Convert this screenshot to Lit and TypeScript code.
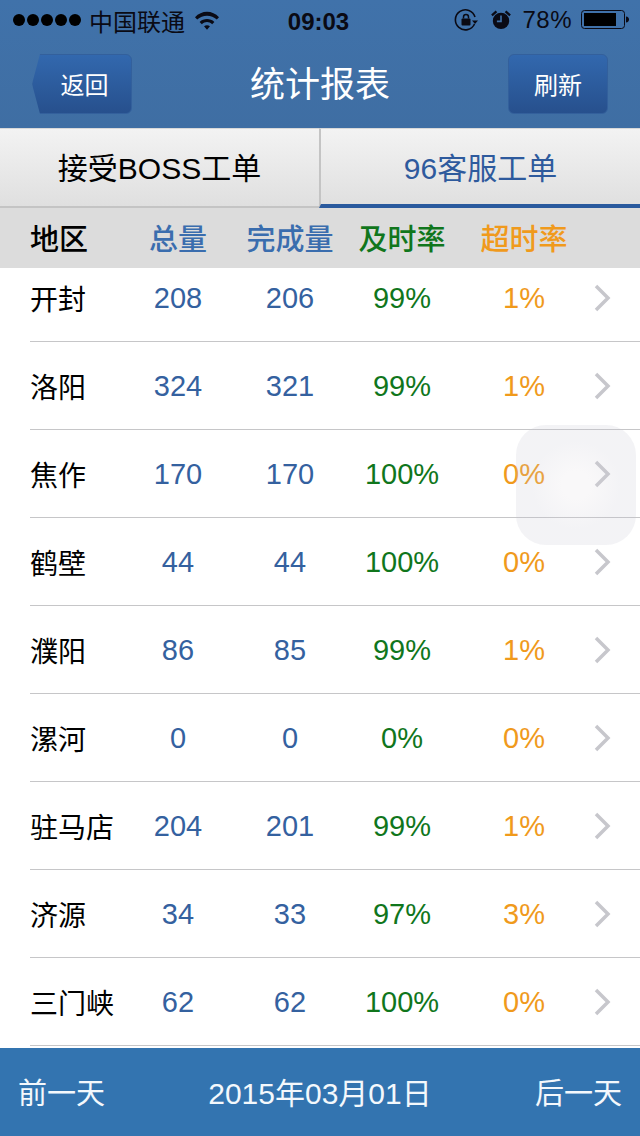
import { LitElement, html, css, svg } from 'lit';
import { customElement } from 'lit/decorators.js';

const ROWS = [
  ['开封', '208', '206', '99%', '1%'],
  ['洛阳', '324', '321', '99%', '1%'],
  ['焦作', '170', '170', '100%', '0%'],
  ['鹤壁', '44', '44', '100%', '0%'],
  ['濮阳', '86', '85', '99%', '1%'],
  ['漯河', '0', '0', '0%', '0%'],
  ['驻马店', '204', '201', '99%', '1%'],
  ['济源', '34', '33', '97%', '3%'],
  ['三门峡', '62', '62', '100%', '0%'],
];

const wifi = svg`<path d="M0 6.500C7 -1.500 19 -1.500 26 6.500L23.600 9C18 3.500 8 3.500 2.400 9Z M5 11.500C9.500 7.500 16.500 7.500 21 11.500L18.600 14C15.200 11 10.800 11 7.400 14Z M9.800 16.300C11.800 14.700 14.200 14.700 16.200 16.300L13 20Z" fill="#0a0a14"/>`;

@customElement('app-root')
export class AppRoot extends LitElement {
  static styles = css`
    :host {
      display: block;
      width: 640px;
      height: 1136px;
      position: relative;
      overflow: hidden;
      background: #fff;
      font-family: 'Liberation Sans', 'Noto Sans CJK SC', sans-serif;
    }

    .top {
      height: 128px;
      background: linear-gradient(#4072aa, #3f6ea3);
    }

    .status {
      height: 40px;
      padding: 0 11px 0 13px;
      display: flex;
      align-items: center;
      font-size: 24px;
      color: #0a0a14;
    }

    .dots {
      display: flex;
      gap: 2px;
      margin-right: 8px;
    }

    .dots i {
      width: 12px;
      height: 12px;
      border-radius: 50%;
      background: #000;
    }

    .carrier {
      margin-right: 10px;
    }

    .time {
      position: absolute;
      left: 0;
      width: 637px;
      top: 8px;
      line-height: 28px;
      text-align: center;
      font-weight: 700;
      pointer-events: none;
    }

    .status-right {
      margin-left: auto;
      display: flex;
      align-items: center;
    }

    .alarm {
      margin-left: 13px;
    }

    .pct {
      margin: 0 9px 0 11px;
      letter-spacing: 0.5px;
    }

    .nav {
      height: 88px;
      padding: 14px 32px 0;
      box-sizing: border-box;
      display: flex;
      justify-content: space-between;
      align-items: flex-start;
    }

    .nav-title {
      color: #fff;
      font-size: 35px;
      line-height: 62px;
    }

    .btn {
      width: 100px;
      height: 60px;
      display: flex;
      align-items: center;
      justify-content: center;
      color: #fff;
      font-size: 24px;
      box-sizing: border-box;
      background: linear-gradient(#3268ae, #27508d);
      border: 1px solid #33609c;
      border-radius: 6px;
      padding-bottom: 2px;
    }

    .btn.back {
      clip-path: polygon(8px 0, 100% 0, 100% 100%, 8px 100%, 0 50%);
      padding-left: 5px;
    }

    .tabs {
      height: 80px;
      display: flex;
      font-size: 30px;
      background: linear-gradient(#f3f3f3, #dfdfdf);
    }

    .tab {
      flex: 1;
      display: flex;
      align-items: center;
      justify-content: center;
      box-sizing: border-box;
      border-bottom: 2px solid #c4c4c4;
      border-top: 1px solid #d8d8d8;
      color: #000;
      padding-bottom: 4px;
    }

    .tab.active {
      color: #2e5a9d;
      border-left: 2px solid #c4c4c4;
      border-bottom: 4px solid #2a5a9e;
      padding-bottom: 2px;
    }

    .grid {
      display: grid;
      grid-template-columns: 92px 112px 112px 112px 132px 1fr;
      padding-left: 30px;
      align-items: center;
      text-align: center;
      font-size: 29px;
    }

    .head {
      height: 60px;
      background: #dcdcdc;
      position: relative;
      z-index: 1;
      font-weight: 500;
      padding-bottom: 2px;
      box-sizing: border-box;
    }

    .head .blue {
      color: #3a6dae;
    }

    .head > :first-child {
      text-align: left;
      color: #000;
    }

    .row > :first-child {
      text-align: left;
      color: #000;
      font-size: 28px;
    }

    .blue {
      color: #34619f;
    }

    .green {
      color: #10761c;
    }

    .orange {
      color: #f09a1c;
    }

    .list {
      height: 780px;
      overflow: hidden;
    }

    .rows {
      margin-top: -14px;
    }

    .row {
      height: 88px;
      position: relative;
    }

    .row::after {
      content: '';
      position: absolute;
      left: 30px;
      right: 0;
      bottom: 0;
      height: 1px;
      background: #c6c6c8;
    }

    .chev {
      display: block;
      margin-left: 3px;
      margin-bottom: 1px;
    }

    .foot {
      height: 88px;
      background: #3374b0;
      color: #f4f8fc;
      font-size: 29px;
      display: flex;
      align-items: center;
      justify-content: space-between;
      padding: 0 18px 2px;
      box-sizing: border-box;
    }

    .date {
      font-size: 30px;
    }

    .touch {
      position: absolute;
      left: 516px;
      top: 425px;
      width: 120px;
      height: 120px;
      border-radius: 30px;
      background: radial-gradient(circle at 50% 50%, rgba(225, 220, 225, 0.2) 0 14px, rgba(195, 195, 208, 0.2) 44px);
    }
  `;

  render() {
    return html`
      <div class="top">
        <div class="status">
          <span class="dots"><i></i><i></i><i></i><i></i><i></i></span>
          <span class="carrier">中国联通</span>
          <svg width="24" height="19" viewBox="0 0 26 20">${wifi}</svg>
          <span class="time">09:03</span>
          <span class="status-right">
            <svg width="24" height="24" viewBox="0 0 24 24" fill="none">
              <path d="M20.500 16A10 10 0 1 1 21 9" stroke="#0a0a14" stroke-width="1.600" />
              <path d="M18 12.500h6l-3 3.500z" fill="#0a0a14" />
              <rect x="7.500" y="10.500" width="9" height="7" rx="1" fill="#0a0a14" />
              <path d="M9.500 10.500V9a2.500 2.500 0 0 1 5 0v1.500" stroke="#0a0a14" stroke-width="1.500" />
            </svg>
            <svg class="alarm" width="20" height="24" viewBox="0 0 22 24">
              <circle cx="11" cy="13" r="9" fill="#0a0a14" />
              <path d="M11 7v6.500H6.500" stroke="#4070a6" stroke-width="1.800" fill="none" />
              <path d="M1 7L6 2.500 M21 7L16 2.500" stroke="#0a0a14" stroke-width="2.500" />
            </svg>
            <span class="pct">78%</span>
            <svg width="48" height="20" viewBox="0 0 48 20">
              <rect x="0.500" y="0.500" width="43" height="18" rx="3" fill="none" stroke="#0a0a14" />
              <rect x="3" y="3" width="32" height="13" fill="#000" />
              <path d="M45 6.500c2 0 3 1.500 3 3s-1 3-3 3z" fill="#0a0a14" />
            </svg>
          </span>
        </div>
        <div class="nav">
          <div class="btn back">返回</div>
          <div class="nav-title">统计报表</div>
          <div class="btn">刷新</div>
        </div>
      </div>
      <div class="tabs">
        <div class="tab">接受BOSS工单</div>
        <div class="tab active">96客服工单</div>
      </div>
      <div class="grid head">
        <span>地区</span>
        <span class="blue">总量</span>
        <span class="blue">完成量</span>
        <span class="green">及时率</span>
        <span class="orange">超时率</span>
      </div>
      <div class="list">
        <div class="rows">
          ${ROWS.map(
            (r) => html`
              <div class="grid row">
                <span>${r[0]}</span>
                <span class="blue">${r[1]}</span>
                <span class="blue">${r[2]}</span>
                <span class="green">${r[3]}</span>
                <span class="orange">${r[4]}</span>
                <svg class="chev" width="18" height="30" viewBox="0 0 18 30">
                  <path d="M3 3l12 12L3 27" fill="none" stroke="#c7c7cc" stroke-width="3.500" />
                </svg>
              </div>
            `,
          )}
        </div>
      </div>
      <div class="foot">
        <span>前一天</span>
        <span class="date">2015年03月01日</span>
        <span>后一天</span>
      </div>
      <div class="touch"></div>
    `;
  }
}
